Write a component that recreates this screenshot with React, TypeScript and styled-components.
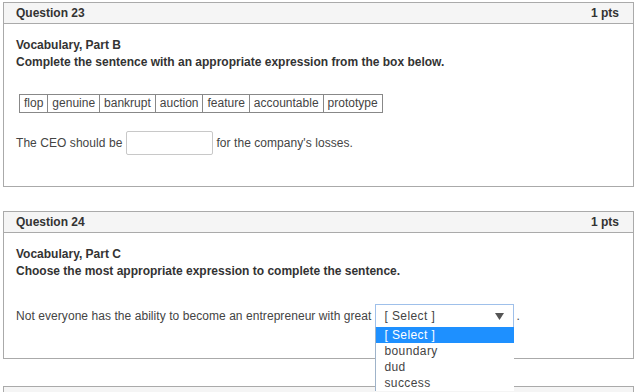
import React from 'react'
import styled, { createGlobalStyle } from 'styled-components'

const GlobalStyle = createGlobalStyle`
  html, body {
    margin: 0;
    padding: 0;
    background: #ffffff;
  }
  body {
    font-family: "Liberation Sans", Arial, sans-serif;
    font-size: 12px;
    color: #333333;
  }
`

const Page = styled.div`
  width: 631px;
  margin-left: 3px;
  padding-top: 2px;
  display: flex;
  flex-direction: column;
  gap: 24px;
`

const Card = styled.div<{ $extraTop?: number }>`
  border: 1px solid #aaaaaa;
  background: #ffffff;
  margin-top: ${(p) => p.$extraTop || 0}px;
`

const Header = styled.div`
  display: flex;
  justify-content: space-between;
  align-items: center;
  height: 20px;
  padding: 0 14px 0 12px;
  background: #f5f5f5;
  border-bottom: 1px solid #aaaaaa;
  font-weight: bold;
  font-size: 12px;
  color: #333333;
`

const Body = styled.div`
  padding: 13px 12px 12px 12px;
`

const Title = styled.div`
  font-weight: bold;
  line-height: 17px;
  color: #333333;
`

const WordBank = styled.table`
  border-collapse: collapse;
  margin: 23px 0 0 3px;
  border: 1px solid #333333;
  font-size: 12px;
  color: #444444;

  td {
    border: 1px solid #888888;
    padding: 0 4px;
    height: 17px;
    line-height: 17px;
  }
`

const Sentence = styled.div<{ $top: number; $bottom: number }>`
  display: flex;
  align-items: center;
  margin: ${(p) => p.$top}px 0 ${(p) => p.$bottom}px 0;
  color: #444444;
  line-height: 17px;
  letter-spacing: 0.06px;
  white-space: pre;
`

const BlankInput = styled.input`
  box-sizing: border-box;
  width: 87px;
  height: 24px;
  margin: 0 3px 0 4px;
  border: 1px solid #c8c8c8;
  border-radius: 2px;
  background: #ffffff;
  outline: none;
`

const SelectWrap = styled.div`
  position: relative;
  margin: 0 2px 0 4px;
`

const SelectBox = styled.div`
  box-sizing: border-box;
  width: 139px;
  height: 24px;
  display: flex;
  align-items: center;
  justify-content: space-between;
  padding: 0 9px 0 8px;
  border: 1px solid #9fc0ea;
  background: #ffffff;
  color: #444444;
  letter-spacing: 0.4px;
`

const Options = styled.ul`
  position: absolute;
  top: 23px;
  left: 0;
  z-index: 5;
  box-sizing: border-box;
  width: 139px;
  margin: 0;
  padding: 0;
  list-style: none;
  background: #ffffff;
  border-left: 1px solid #9fb3c9;
`

const Option = styled.li<{ $active?: boolean }>`
  height: 16px;
  line-height: 16px;
  padding-left: 8px;
  letter-spacing: 0.4px;
  color: ${(p) => (p.$active ? '#ffffff' : '#444444')};
  background: ${(p) => (p.$active ? '#1e90ff' : 'transparent')};
`

const words = ['flop', 'genuine', 'bankrupt', 'auction', 'feature', 'accountable', 'prototype']
const choices = ['[ Select ]', 'boundary', 'dud', 'success']

const Arrow = () => (
  <svg width="9" height="7" viewBox="0 0 9 7">
    <path d="M0 0 L9 0 L4.5 7 Z" fill="#555555" />
  </svg>
)

const App = () => {
  return (
    <>
      <GlobalStyle />
      <Page>
        <Card>
          <Header>
            <span>Question 23</span>
            <span>1 pts</span>
          </Header>
          <Body>
            <Title>Vocabulary, Part B</Title>
            <Title>Complete the sentence with an appropriate expression from the box below.</Title>
            <WordBank>
              <tbody>
                <tr>
                  {words.map((w) => (
                    <td key={w}>{w}</td>
                  ))}
                </tr>
              </tbody>
            </WordBank>
            <Sentence $top={18} $bottom={19}>
              The CEO should be
              <BlankInput type="text" />
              for the company's losses.
            </Sentence>
          </Body>
        </Card>

        <Card>
          <Header>
            <span>Question 24</span>
            <span>1 pts</span>
          </Header>
          <Body>
            <Title>Vocabulary, Part C</Title>
            <Title>Choose the most appropriate expression to complete the sentence.</Title>
            <Sentence $top={24} $bottom={18}>
              Not everyone has the ability to become an entrepreneur with great
              <SelectWrap>
                <SelectBox>
                  <span>[ Select ]</span>
                  <Arrow />
                </SelectBox>
                <Options>
                  {choices.map((c, i) => (
                    <Option key={c} $active={i === 0}>
                      {c}
                    </Option>
                  ))}
                </Options>
              </SelectWrap>
              .
            </Sentence>
          </Body>
        </Card>

        <Card $extraTop={3}>
          <Header />
          <Body />
        </Card>
      </Page>
    </>
  )
}

export default App
